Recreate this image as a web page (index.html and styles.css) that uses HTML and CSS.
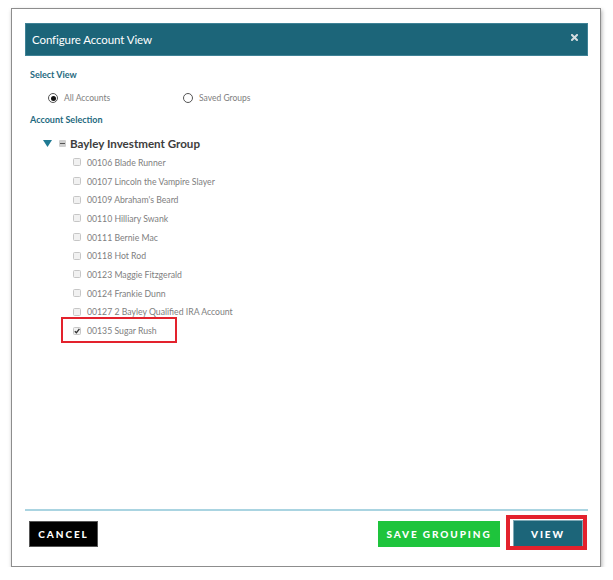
FILE: index.html
```html
<!DOCTYPE html>
<html lang="en">
<head>
    <meta charset="UTF-8">
    <meta name="viewport" content="width=device-width, initial-scale=1.0">
    <title>Configure Account View</title>
    <link rel="stylesheet" href="styles.css">
</head>
<body>
    <div class="frame">
        <div class="dialog">
            <div class="dialog-header">
                <span class="title">Configure Account View</span>
                <svg class="close-icon" width="7" height="7" viewBox="0 0 7 7">
                    <path d="M1 1L6 6M6 1L1 6" stroke="#d4dde0" stroke-width="2" stroke-linecap="square"/>
                </svg>
            </div>

            <div class="dialog-body">
                <div class="section-label">Select View</div>
                <div class="view-options">
                    <label class="radio-option"><span class="radio checked"></span>All Accounts</label>
                    <label class="radio-option"><span class="radio"></span>Saved Groups</label>
                </div>

                <div class="section-label">Account Selection</div>
                <div class="tree">
                    <div class="tree-group">
                        <svg class="caret" width="9" height="7" viewBox="0 0 9 7">
                            <polygon points="0,0 9,0 4.5,7" fill="#1f7a93"/>
                        </svg>
                        <span class="collapse-box"></span>
                        <span class="group-name">Bayley Investment Group</span>
                    </div>
                    <ul class="account-list" id="accountList">
                        <!-- accounts inserted here -->
                    </ul>
                </div>
            </div>

            <div class="dialog-footer">
                <button class="btn btn-cancel">Cancel</button>
                <div class="footer-actions">
                    <button class="btn btn-save">Save Grouping</button>
                    <button class="btn btn-view marked">View</button>
                </div>
            </div>
        </div>
    </div>

    <script>
        const accounts = [
            { id: '00106', name: 'Blade Runner' },
            { id: '00107', name: 'Lincoln the Vampire Slayer' },
            { id: '00109', name: "Abraham's Beard" },
            { id: '00110', name: 'Hilliary Swank' },
            { id: '00111', name: 'Bernie Mac' },
            { id: '00118', name: 'Hot Rod' },
            { id: '00123', name: 'Maggie Fitzgerald' },
            { id: '00124', name: 'Frankie Dunn' },
            { id: '00127', name: '2 Bayley Qualified IRA Account' },
            { id: '00135', name: 'Sugar Rush', checked: true }
        ];

        const checkMark = '<svg width="6" height="6" viewBox="0 0 6 6"><path d="M0.8 3.2L2.4 4.8L5.4 0.8" fill="none" stroke="#333" stroke-width="1.4"/></svg>';

        document.getElementById('accountList').innerHTML = accounts.map(acc => `
            <li class="account${acc.checked ? ' marked' : ''}">
                <span class="checkbox">${acc.checked ? checkMark : ''}</span>
                ${acc.id} ${acc.name}
            </li>
        `).join('');
    </script>
</body>
</html>
```

FILE: styles.css
```css
* {
    box-sizing: border-box;
}

body {
    margin: 0;
    background: #fff;
    font-family: Lato, "Open Sans", Arial, sans-serif;
}

.frame {
    width: 590px;
    height: 559px;
    margin: 8px 0 0 11px;
    padding: 14px 12px 19px 13px;
    border: 1px solid #8d8d8d;
    box-shadow: 1px 2px 4px rgba(0,0,0,0.3);
    background: #fff;
}

.dialog {
    height: 100%;
    display: flex;
    flex-direction: column;
}

.dialog-header {
    height: 33px;
    background: #1c6579;
    display: flex;
    align-items: center;
    justify-content: space-between;
    padding: 0 9px 0 6px;
    border: 1px solid #3f8296;
}

.title {
    color: #fff;
    font-size: 11.5px;
    letter-spacing: -0.1px;
}

.close-icon {
    margin-top: -4px;
}

.dialog-body {
    flex: 1;
    padding: 10px 0 0 5px;
}

.section-label {
    font-size: 9px;
    font-weight: 700;
    color: #1f6a80;
    line-height: 18px;
}

.view-options {
    display: flex;
    margin: 5px 0 4px 18px;
    height: 18px;
    align-items: center;
}

.radio-option {
    width: 135px;
    display: flex;
    align-items: center;
    gap: 6px;
    font-size: 8.5px;
    color: #808080;
}

.radio {
    width: 10px;
    height: 10px;
    border: 1px solid #555;
    border-radius: 50%;
    display: flex;
    align-items: center;
    justify-content: center;
}

.radio.checked::before {
    content: '';
    width: 5px;
    height: 5px;
    border-radius: 50%;
    background: #111;
}

.tree {
    padding-left: 13px;
    margin-top: 5px;
}

.tree-group {
    display: flex;
    align-items: center;
    height: 19px;
}

.caret {
    margin-right: 7px;
}

.collapse-box {
    width: 7px;
    height: 7px;
    background: #cfcfcf;
    border-radius: 1px;
    position: relative;
    margin-right: 4px;
}

.collapse-box::before {
    content: '';
    position: absolute;
    left: 1px;
    right: 1px;
    top: 3px;
    height: 1px;
    background: #555;
}

.group-name {
    font-size: 11.6px;
    font-weight: 700;
    color: #3d3d3d;
}

.account-list {
    list-style: none;
    margin: 0;
    padding: 0 0 0 30px;
}

.account {
    height: 18.7px;
    display: flex;
    align-items: center;
    gap: 6px;
    width: fit-content;
    font-size: 8.7px;
    color: #808080;
}

.checkbox {
    width: 8px;
    height: 8px;
    border: 1px solid #c6c6c6;
    border-radius: 1.5px;
    background: #f1f1f1;
    display: flex;
    align-items: center;
    justify-content: center;
}

.marked {
    position: relative;
}

.account.marked::after {
    content: '';
    position: absolute;
    left: -12px;
    right: -20px;
    top: -4px;
    bottom: -3px;
    border: 2px solid #e3222d;
}

.dialog-footer {
    border-top: 2px solid #aad4e1;
    padding: 9px 5px 0 4px;
    display: flex;
    justify-content: space-between;
    align-items: center;
}

.footer-actions {
    display: flex;
    align-items: center;
    gap: 13px;
}

.btn {
    height: 26px;
    border: none;
    color: #fff;
    font-family: Lato, "Open Sans", Arial, sans-serif;
    font-size: 10px;
    font-weight: 900;
    letter-spacing: 1.9px;
    text-transform: uppercase;
    padding: 0;
}

.btn-cancel {
    width: 69px;
    background: #000;
    border: 1px solid #555;
}

.btn-save {
    width: 122px;
    background: #1ec43c;
}

.btn-view {
    width: 70px;
    height: 27px;
    background: #1c6579;
    border: 1px solid #7fa9b6;
}

.btn-view.marked::after {
    content: '';
    position: absolute;
    left: -8px;
    right: -5px;
    top: -6px;
    bottom: -4px;
    border: 4px solid #e3222d;
}
```
